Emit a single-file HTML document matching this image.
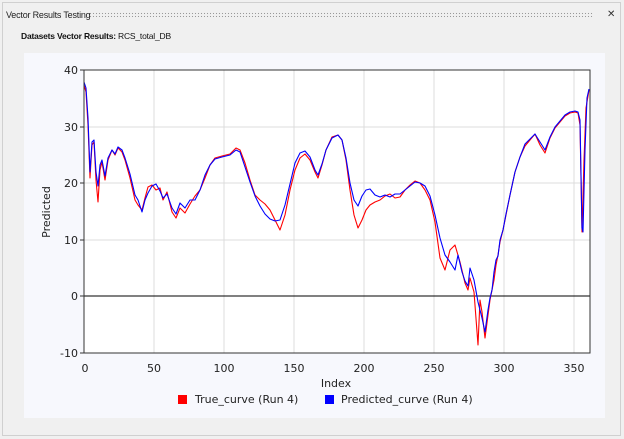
<!DOCTYPE html>
<html><head><style>
html,body{margin:0;padding:0;width:624px;height:439px;overflow:hidden;background:#f0f0f0;font-family:"Liberation Sans",sans-serif;}
.frame{position:absolute;left:2px;top:2px;width:617px;height:432px;border:1px solid #d0d0d0;}
.title{position:absolute;left:6px;top:10px;font-size:9px;color:#222;letter-spacing:-0.2px;}
.dots{position:absolute;left:89px;top:12px;width:504px;height:5px;background-image:radial-gradient(circle,#999 0.6px,transparent 0.8px);background-size:3px 3px;}
.close{position:absolute;left:607px;top:9px;font-size:10px;color:#333;}
.sub{position:absolute;left:21px;top:31px;font-size:8.5px;color:#111;letter-spacing:-0.2px;}
.panel{position:absolute;left:24px;top:53px;width:581px;height:365px;background:#f7f8fd;}
</style></head><body>
<div class="frame"></div>
<div class="title">Vector Results Testing</div>
<div class="dots"></div>
<div class="close">✕</div>
<div class="sub"><b>Datasets Vector Results:</b> RCS_total_DB</div>
<div class="panel"></div>
<svg width="624" height="439" style="position:absolute;left:0;top:0" font-family="DejaVu Sans, sans-serif">
<rect x="84" y="70" width="506" height="283" fill="#fff"/>
<g stroke="#dcdcdc" stroke-width="1">
<line x1="154" y1="70" x2="154" y2="353"/><line x1="224" y1="70" x2="224" y2="353"/><line x1="294" y1="70" x2="294" y2="353"/><line x1="364" y1="70" x2="364" y2="353"/><line x1="434" y1="70" x2="434" y2="353"/><line x1="504" y1="70" x2="504" y2="353"/><line x1="574" y1="70" x2="574" y2="353"/>
<line x1="84" y1="127" x2="590" y2="127"/><line x1="84" y1="183" x2="590" y2="183"/><line x1="84" y1="240" x2="590" y2="240"/><line x1="84" y1="353" x2="590" y2="353"/>
</g>
<line x1="84" y1="296" x2="590" y2="296" stroke="#000" stroke-width="1"/>
<g fill="none" stroke-width="1.1" stroke-linejoin="round">
<polyline stroke="#f00" points="84,85 86,92 88,125 90,178 92,145 94,142 96,180 98,202 100,170 102,162 105,180 108,160 112,150 115,155 118,148 122,152 125,160 130,178 135,200 138,205 142,210 145,198 148,187 152,185 156,190 160,188 163,200 167,192 172,212 176,218 180,208 185,213 190,204 195,196 200,190 205,178 210,165 215,158 222,156 230,154 236,148 240,150 245,163 250,180 255,195 260,200 265,204 270,210 275,220 280,230 285,215 290,190 295,170 300,158 305,154 310,160 315,172 318,178 322,165 326,150 332,137 338,135 342,140 346,160 350,190 354,215 358,228 362,220 366,210 370,205 375,202 380,200 385,196 390,194 395,198 400,197 405,190 410,185 415,181 420,183 425,190 430,200 435,222 440,258 445,270 450,250 455,245 460,262 465,283 468,290 470,278 474,292 478,345 480,300 482,312 485,338 488,315 490,300 492,290 494,280 496,265 498,255 500,242 503,230 506,215 510,195 515,172 520,157 525,146 530,140 535,134 540,145 545,153 550,138 555,128 560,122 565,116 570,113 575,112 578,113 580,125 582,232 584,160 586,108 589,90"/>
<polyline stroke="#00f" points="84,82 86,88 88,118 90,172 92,142 94,140 96,172 98,186 100,165 102,160 105,176 108,158 112,150 115,154 118,147 122,150 125,158 130,174 135,195 138,200 142,212 145,200 148,193 152,186 156,184 160,191 163,198 167,194 172,208 176,214 180,203 185,208 190,200 195,200 200,190 205,175 210,165 215,159 222,157 230,155 236,150 240,152 245,167 250,182 255,196 260,206 265,214 270,219 275,221 280,220 285,205 290,184 295,163 300,153 305,151 310,157 315,170 318,175 322,164 326,150 332,138 338,135 342,140 346,158 350,183 354,200 358,206 362,196 366,190 370,189 375,195 380,197 385,195 390,197 395,194 400,194 405,190 410,186 415,182 420,183 425,186 430,196 435,215 440,238 445,255 450,262 455,270 458,255 462,272 465,281 468,286 470,268 474,280 478,302 482,318 485,332 488,310 490,298 492,290 494,272 496,260 498,256 500,240 503,230 506,214 510,195 515,172 520,157 525,144 530,139 535,134 540,142 545,150 550,137 555,127 560,121 565,115 570,112 575,111 578,112 580,120 582,228 583,232 585,150 587,98 589,89"/>
</g>
<rect x="84" y="70" width="506" height="283" fill="none" stroke="#333" stroke-width="1"/>
<g stroke="#333"><line x1="80" y1="70" x2="84" y2="70"/><line x1="80" y1="127" x2="84" y2="127"/><line x1="80" y1="183" x2="84" y2="183"/><line x1="80" y1="240" x2="84" y2="240"/><line x1="80" y1="296" x2="84" y2="296"/><line x1="80" y1="353" x2="84" y2="353"/></g>
<g font-size="11" fill="#222" text-anchor="end">
<text x="78" y="74">40</text><text x="78" y="131">30</text><text x="78" y="187">20</text><text x="78" y="244">10</text><text x="78" y="300">0</text><text x="78" y="357">-10</text>
</g>
<g font-size="11" fill="#222" text-anchor="middle">
<text x="85" y="372">0</text><text x="154" y="372">50</text><text x="224" y="372">100</text><text x="294" y="372">150</text><text x="364" y="372">200</text><text x="434" y="372">250</text><text x="504" y="372">300</text><text x="574" y="372">350</text>
<text x="336" y="387">Index</text>
<text x="50" y="212" transform="rotate(-90 50 212)">Predicted</text>
</g>
<rect x="178" y="395" width="9" height="9" fill="#f00"/>
<text x="195" y="403" font-size="11" fill="#222">True_curve (Run 4)</text>
<rect x="325" y="395" width="9" height="9" fill="#00f"/>
<text x="341" y="403" font-size="11" fill="#222">Predicted_curve (Run 4)</text>
</svg>
</body></html>
